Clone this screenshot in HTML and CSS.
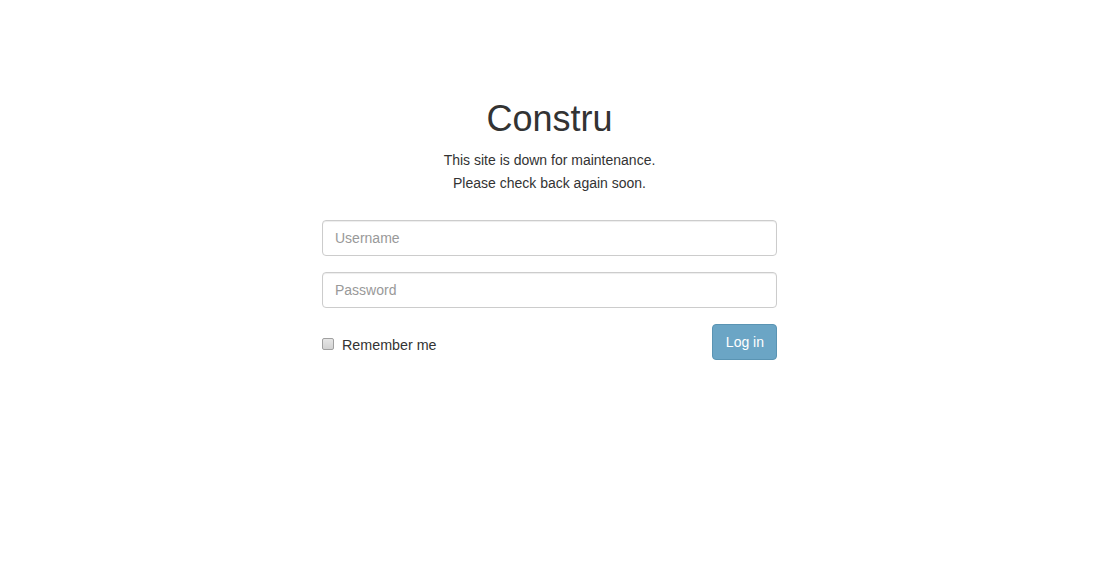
FILE: index.html
```html
<!DOCTYPE html>
<html>
<head>
<meta charset="utf-8">
<title>Constru</title>
<link rel="stylesheet" href="styles.css">
</head>
<body>
<div class="wrap">
  <h1 class="title">Constru</h1>
  <p class="msg">This site is down for maintenance.<br>Please check back again soon.</p>
  <form class="login">
    <input class="field" type="text" placeholder="Username">
    <input class="field" type="password" placeholder="Password">
    <div class="row">
      <label class="remember"><span class="check"></span>Remember me</label>
      <button type="button" class="btn">Log in</button>
    </div>
  </form>
</div>
</body>
</html>
```
FILE: styles.css
```css
html, body {
  margin: 0;
  padding: 0;
  background: #fff;
}
body {
  font-family: "Liberation Sans", Arial, sans-serif;
  font-size: 14px;
  color: #333;
}
.wrap {
  width: 455px;
  margin: 0 auto;
  padding-top: 99px;
}
.title {
  margin: 0;
  font-size: 36px;
  font-weight: 500;
  line-height: 40px;
  text-align: center;
  color: #333;
}
.msg {
  margin: 10px 0 0;
  line-height: 23px;
  text-align: center;
}
.login {
  margin-top: 25px;
  display: flex;
  flex-direction: column;
  gap: 16px;
}
.field {
  box-sizing: border-box;
  width: 100%;
  height: 36px;
  padding: 6px 12px;
  border: 1px solid #ccc;
  border-radius: 4px;
  font-family: inherit;
  font-size: 14px;
  color: #555;
  box-shadow: inset 0 1px 1px rgba(0,0,0,.075);
  outline: none;
}
.field::placeholder {
  color: #999;
}
.row {
  display: flex;
  justify-content: space-between;
  align-items: center;
}
.remember {
  display: flex;
  align-items: center;
  gap: 8px;
  font-size: 14.3px;
  margin-top: 5px;
}
.check {
  box-sizing: border-box;
  width: 12px;
  height: 12px;
  border: 1px solid #a0a0a0;
  border-radius: 2px;
  background: linear-gradient(#e6e6e6, #d2d2d2);
  margin-top: -2px;
}
.btn {
  height: 36px;
  padding: 6px 12px 6px 13px;
  border: 1px solid #5a94b3;
  border-radius: 4px;
  background: #6ba5c5;
  color: #fff;
  font-family: inherit;
  font-size: 14px;
}
```
